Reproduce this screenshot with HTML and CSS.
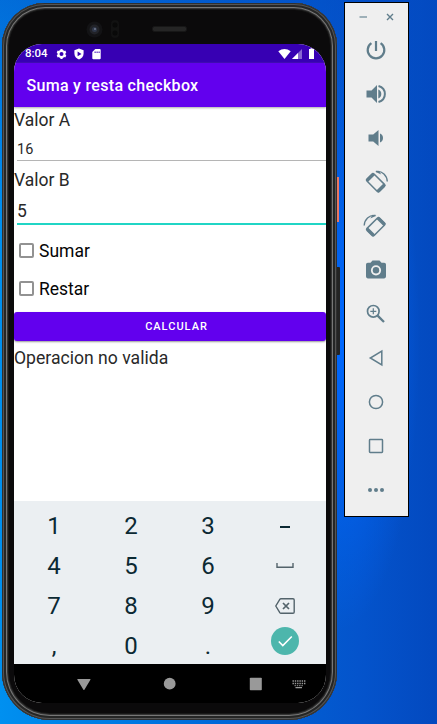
FILE: index.html
```html
<!DOCTYPE html>
<html lang="es">
<head>
<meta charset="utf-8">
<title>Suma y resta checkbox</title>
<link rel="stylesheet" href="styles.css">
</head>
<body>
<main class="desktop">
  <section class="phone">
    <i class="side-button power-button"></i>
    <i class="side-button volume-button"></i>
    <div class="bezel">
      <svg width="312" height="41" viewBox="0 0 312 41">
        <circle cx="80.500" cy="26.500" r="8" fill="#131315"/>
        <circle cx="80.500" cy="26.500" r="5" fill="#222328"/>
        <circle cx="80.500" cy="26.500" r="2.500" fill="#30384b"/>
        <circle cx="81" cy="26" r=".8" fill="#a0a9bb"/>
        <rect x="97" y="17" width="8" height="18" rx="4" fill="#121212"/>
        <circle cx="101" cy="22" r="2.500" fill="#090909"/>
        <circle cx="101" cy="30" r="2.500" fill="#090909"/>
        <rect x="138.500" y="23.500" width="34" height="5" rx="2" fill="#252525" stroke="#171717"/>
      </svg>
    </div>
    <div class="screen">
      <header class="status">
        <span class="clock">8:04</span>
        <svg class="status-left" width="50" height="12" viewBox="0 0 50 12" fill="#fff">
          <g transform="translate(5.500 6)"><circle r="3" fill="none" stroke="#fff" stroke-width="2"/><path d="M-1-5h2l.4 2h-2.800zM-1 5h2l.4-2h-2.800zM-4.800-1.600l1-1.800 2 1-1.400 2.200zM4.800-1.600l-1-1.800-2 1 1.400 2.200zM-4.800 1.600l1 1.800 2-1-1.400-2.200zM4.800 1.600l-1 1.800-2-1 1.400-2.200z"/></g>
          <path fill-rule="evenodd" d="M23 .6l4.600 1.700v3.200c0 2.800-1.900 5.100-4.600 6-2.700-.9-4.600-3.200-4.600-6V2.300zM21.600 3.400v4.900L25.500 5.900z"/>
          <path fill-rule="evenodd" d="M39.300 1h4.400q1 0 1 1v8.300q0 1-1 1h-6.400q-1 0-1-1V4zM38.600 3.500v1.500h1v-1.500zm2 0v1.500h1v-1.500zm2 0v1.500h1v-1.500z"/>
        </svg>
        <svg class="status-right" width="38" height="12" viewBox="0 0 38 12" fill="#fff">
          <path d="M.3 3.200Q6.500-1.400 12.700 3.200L6.500 11z"/>
          <path opacity=".4" d="M24 1v10H14z"/><path d="M20 5v6h-6z"/>
          <path d="M31 1H32.500V.2h2V1H36v10h-5V1z"/>
        </svg>
      </header>
      <h1 class="title">Suma y resta checkbox</h1>
      <div class="content">
        <div class="label label-a">Valor A</div>
        <div class="field field-a">16</div>
        <div class="label label-b">Valor B</div>
        <div class="field field-b">5</div>
        <div class="options">
          <div class="option"><i class="box"></i>Sumar</div>
          <div class="option"><i class="box"></i>Restar</div>
        </div>
        <div class="calc">CALCULAR</div>
        <div class="result">Operacion no valida</div>
      </div>
      <div class="keyboard">
        <span>1</span><span>2</span><span>3</span><span><i class="minus"></i></span>
        <span>4</span><span>5</span><span>6</span>
        <span><svg width="18" height="6" viewBox="0 0 18 6" fill="none" stroke="#53636b" stroke-width="1.400"><path d="M1 0v4.300h16V0"/></svg></span>
        <span>7</span><span>8</span><span>9</span>
        <span><svg width="20" height="16" viewBox="0 0 20 16" fill="none" stroke="#53636b" stroke-width="1.400"><path d="M6 .8h12q1.200 0 1.200 1.200v12q0 1.200-1.200 1.200H6q-.8 0-1.200-.6L.8 8l4-6.600Q5.200.8 6 .8z"/><path d="M8 5l6 6m0-6l-6 6" stroke-width="1.700"/></svg></span>
        <span>,</span><span>0</span><span>.</span>
        <span class="enter"><svg width="28" height="28" viewBox="0 0 28 28"><circle cx="14" cy="14" r="14" fill="#4db6ac"/><path d="M7.800 14.500l4 4 9-9" fill="none" stroke="#fff" stroke-width="1.600"/></svg></span>
      </div>
      <svg class="navigation" width="312" height="39" viewBox="0 0 312 39" fill="#999">
        <path d="M63.700 15h12.400q.7 0 .3.700l-6 10q-.5.700-1 0l-6-10q-.4-.7.300-.7z"/>
        <circle cx="155.700" cy="19.700" r="5.900"/>
        <rect x="235.800" y="13.700" width="12" height="12.500" rx=".8"/>
        <path d="M278.500 17h13M278.500 19.500h13" fill="none" stroke="#999" stroke-width="1.300" stroke-dasharray="1.400 .9"/>
        <path d="M280.500 21.700h9" fill="none" stroke="#999" stroke-width="1" stroke-dasharray="1.400 .9"/>
        <path d="M281.500 23h6.500v1.200h-6.500z"/>
      </svg>
    </div>
  </section>
  <aside class="toolbar">
    <svg class="window-controls" width="63" height="25" viewBox="0 0 63 25" fill="none" stroke="#607d8b">
      <path d="M14.500 14h7.500" stroke="#9eb0b8" stroke-width="2"/><path d="M42 11l6 6m0-6l-6 6" stroke-width="1.400"/>
    </svg>
    <svg class="tool" viewBox="0 0 24 24"><path d="M12 3v10" fill="none" stroke="#607d8b" stroke-width="2.200"/><path d="M7.400 5.200a8.300 8.300 0 1 0 9.200 0" fill="none" stroke="#607d8b" stroke-width="2.200"/></svg>
    <svg class="tool" viewBox="0 0 24 24"><path d="M2.500 8.500h5L13 3v18l-5.500-5.500h-5zM14.300 7.500c4 1.400 4 7.600 0 9z"/><path d="M14.500 4c8.500 2.400 8.500 13.600 0 16" fill="none" stroke="#607d8b" stroke-width="2"/></svg>
    <svg class="tool" viewBox="0 0 24 24"><path d="M4.500 8.500h4.700L14.500 4v16l-5.300-4.500H4.500zM16 7.500c4 1.400 4 7.600 0 9z"/></svg>
    <svg class="tool" viewBox="0 0 24 24"><g id="rotate"><g transform="rotate(-45 11.700 12.700)" fill="none" stroke="#607d8b"><rect x="6.700" y="3.900" width="10" height="17.600" rx="1.400" stroke-width="1.500"/><path d="M6.700 5.200h10M6.700 20.200h10" stroke-width="3"/></g><path d="M12 1.500C18.500.8 23 5.300 23.300 11.500" fill="none" stroke="#607d8b" stroke-width="1.400"/><path d="M11.200 1.700l3.800-1 2.200 3.700z"/></g></svg>
    <svg class="tool" viewBox="0 0 24 24"><use href="#rotate" transform="matrix(-1 0 0 1 23.500 0)"/></svg>
    <svg class="tool" viewBox="0 0 24 24"><path fill-rule="evenodd" d="M8.500 2.500h7l2 2.300h2.700q1.800 0 1.800 1.800v12q0 1.800-1.800 1.800H3.800Q2 20.400 2 18.600v-12q0-1.800 1.800-1.800h2.700zM12 7.200a5.100 5.100 0 1 0 0 10.200 5.100 5.100 0 0 0 0-10.200z"/><circle cx="12" cy="12.300" r="3.200"/></svg>
    <svg class="tool" viewBox="0 0 24 24"><g fill="none" stroke="#607d8b"><circle cx="9.300" cy="9.300" r="5.800" stroke-width="1.700"/><path d="M6.300 9.300h6m-3-3v6" stroke-width="1.200"/><path d="M13.600 13.600l6.400 6.400" stroke-width="2.300"/></g></svg>
    <svg class="tool" viewBox="0 0 24 24"><path d="M17.800 5v14L6.300 12z" fill="none" stroke="#607d8b" stroke-width="1.500"/></svg>
    <svg class="tool" viewBox="0 0 24 24"><circle cx="12" cy="12" r="6.600" fill="none" stroke="#607d8b" stroke-width="1.500"/></svg>
    <svg class="tool" viewBox="0 0 24 24"><rect x="5.500" y="5.500" width="13" height="13" rx=".7" fill="none" stroke="#607d8b" stroke-width="1.500"/></svg>
    <svg class="tool" viewBox="0 0 24 24"><circle cx="6" cy="12" r="2"/><circle cx="12" cy="12" r="2"/><circle cx="18" cy="12" r="2"/></svg>
  </aside>
</main>
</body>
</html>
```
FILE: styles.css
```css
* { box-sizing: border-box; }
body { margin: 0; font-family: Roboto, "Liberation Sans", sans-serif; }
.desktop {
  display: flex;
  align-items: flex-start;
  width: 437px;
  height: 724px;
  padding: 2px 0 0 2px;
  overflow: hidden;
  background:
    radial-gradient(ellipse 80px 290px at 340px 340px, #0068ff 0, rgba(0, 104, 255, 0) 100%),
    linear-gradient(180deg, rgba(3, 75, 195, .5) 0, rgba(3, 75, 195, 0) 220px),
    linear-gradient(90deg, #0090f0 0, #0068d8 50%, #0454cc 82%, #0349bf 100%);
}
.phone {
  position: relative;
  width: 335px;
  height: 717px;
  margin-top: 1px;
  padding: 0 11px 0 12px;
  border-radius: 43px 43px 48px 48px;
  background: #0b0a0b;
  box-shadow: inset 0 0 0 1px #303030, inset 0 0 0 2px #555, inset 0 0 0 4px #252626, inset 0 0 0 5px #777, inset 0 0 0 6px #343434, inset 0 0 0 7px #171717;
}
.side-button { position: absolute; left: 335px; }
.power-button { top: 174px; width: 2px; height: 45px; background: #e97864; }
.volume-button { top: 264px; width: 3px; height: 88px; background: #242424; border-radius: 0 1px 1px 0; }
.bezel { height: 41px; }
.bezel svg, .toolbar svg, .navigation { display: block; }
.screen {
  width: 312px;
  height: 659px;
  overflow: hidden;
  border-radius: 28px;
  background: #fff;
}
.status {
  display: flex;
  align-items: center;
  height: 19px;
  padding: 0 10px 0 11px;
  background: #3700b3;
  color: #fff;
}
.clock { width: 31px; font-size: 11.500px; font-weight: 500; line-height: 19px; }
.status-left { margin-right: auto; }
.title {
  position: relative;
  height: 44px;
  margin: 0;
  padding-left: 12.500px;
  background: #6200ee;
  box-shadow: 0 1px 2px #aaa;
  color: #fff;
  font-size: 16px;
  font-weight: 500;
  line-height: 46px;
  letter-spacing: .3px;
}
.content { height: 394px; color: #292929; }
.label { font-size: 17.500px; }
.label-a { height: 25px; line-height: 26px; }
.label-b { height: 38px; line-height: 38px; }
.field { margin-left: 3px; }
.field-a { height: 29px; border-bottom: 1px solid #b5b5b5; font-size: 14.500px; line-height: 35px; }
.field-b { height: 26px; border-bottom: 2px solid #20d5c5; font-size: 17.500px; line-height: 25px; }
.options { padding: 7px 0 4px; }
.option { display: flex; align-items: center; gap: 5px; height: 38px; padding-left: 5px; color: #050505; font-size: 17.500px; }
.box { width: 15px; height: 15px; border: 2px solid #929292; border-radius: 2px; margin-top: -2px; }
.calc { height: 29px; border-radius: 3px; background: #6200ee; box-shadow: 0 1px 2px #999; color: #fff; font-size: 11px; font-weight: 500; line-height: 30px; letter-spacing: 1px; padding-left: 13px; text-align: center; }
.result { line-height: 34px; font-size: 17.600px; }
.keyboard {
  display: grid;
  grid-template-columns: repeat(4, 77px);
  grid-template-rows: repeat(4, 40px);
  height: 163px;
  padding: 5px 2px 0 1.500px;
  background: #ebeff2;
  color: #0b2933;
  font-size: 24px;
}
.keyboard span { display: flex; align-items: center; justify-content: center; line-height: 42px; }
.keyboard svg { display: block; }
.minus { width: 10px; height: 2px; margin-top: 2px; background: #0b2933; }
.keyboard .enter { padding-bottom: 10px; }
.navigation { background: #000; }
.toolbar { width: 65px; height: 515px; margin-left: 7px; border: 1px solid #000; background: #efefef; }
.tool { width: 24px; height: 24px; margin: 0 auto 20px 19px; overflow: visible; fill: #607d8b; }
.window-controls { margin-bottom: 10px; }
```
